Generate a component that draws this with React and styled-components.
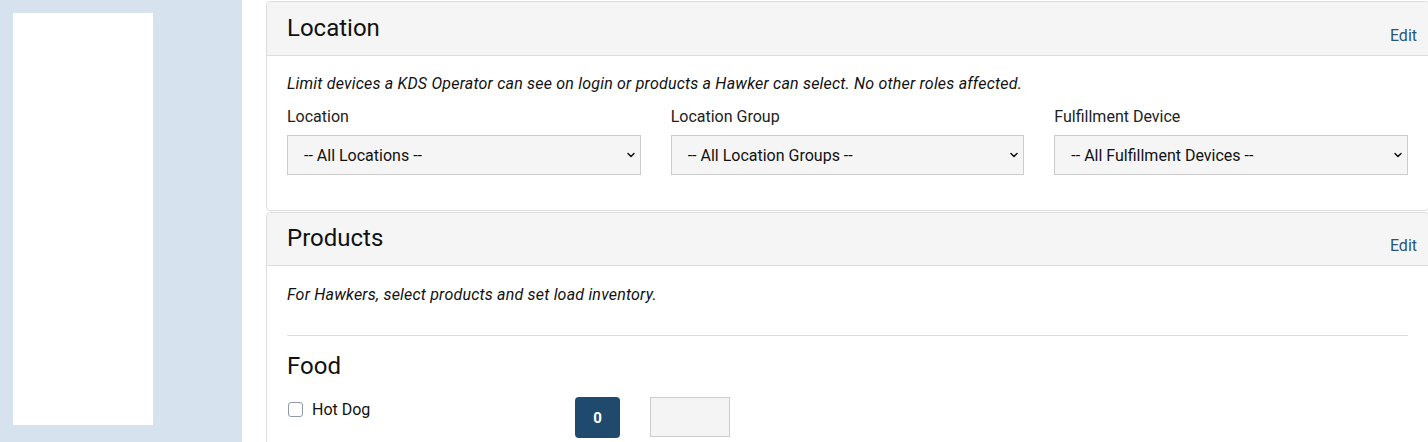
import React from 'react'
import styled, { createGlobalStyle } from 'styled-components'
import { ChevronDown } from 'lucide-react'

const GlobalStyle = createGlobalStyle`
    html, body {
        margin: 0;
        padding: 0;
        background: #ffffff;
        font-family: Roboto, "Liberation Sans", Arial, sans-serif;
        color: #1a1a1a;
        overflow: hidden;
    }
`

const Page = styled.div`
    display: flex;
    height: 442px;
`

const Sidebar = styled.aside`
    width: 242px;
    flex-shrink: 0;
    background: #d6e2ed;
    padding: 13px;
    box-sizing: border-box;
`

const SidebarPanel = styled.div`
    width: 140px;
    height: 412px;
    background: #ffffff;
`

const Main = styled.main`
    flex: 1;
    padding: 1px 0 0 24px;
    display: flex;
    flex-direction: column;
    gap: 1px;
    min-width: 0;
`

const Card = styled.section`
    border: 1px solid #dddddd;
    border-radius: 4px;
    margin-right: -1px;
    background: #ffffff;
    flex-shrink: 0;
`

const CardHeader = styled.header`
    display: flex;
    justify-content: space-between;
    align-items: flex-end;
    background: #f5f5f5;
    border-bottom: 1px solid #dddddd;
    border-radius: 4px 4px 0 0;
    padding: ${p => p.$tall ? '11px' : '10px'} 11px 11px 20px;
`

const CardTitle = styled.h2`
    margin: 0 0 1px;
    font-size: 24px;
    line-height: 30px;
    font-weight: 400;
    color: #111111;
`

const EditLink = styled.a`
    font-size: 16px;
    line-height: 18px;
    margin-bottom: -1px;
    color: #2a5478;
    text-decoration: none;
    cursor: pointer;
`

const CardBody = styled.div`
    padding: ${p => p.$top}px 20px ${p => p.$bottom}px 20px;
`

const Note = styled.p`
    margin: 0;
    font-size: 16px;
    line-height: 20px;
    font-style: italic;
    letter-spacing: 0.2px;
    color: #111111;
`

const FilterGrid = styled.div`
    display: grid;
    grid-template-columns: repeat(3, 1fr);
    column-gap: 30px;
    margin-top: 13px;
`

const Field = styled.label`
    display: flex;
    flex-direction: column;
    gap: 8px;
`

const FieldLabel = styled.span`
    font-size: 16px;
    line-height: 20px;
    color: #222222;
`

const SelectWrap = styled.div`
    position: relative;
    height: 40px;
`

const Select = styled.select`
    appearance: none;
    width: 100%;
    height: 40px;
    box-sizing: border-box;
    background: #f5f5f5;
    border: 1px solid #cccccc;
    border-radius: 0;
    padding: 0 30px 0 16px;
    font-family: inherit;
    font-size: 16px;
    color: #111111;
`

const Chevron = styled(ChevronDown)`
    position: absolute;
    right: 4px;
    top: 14px;
    pointer-events: none;
    color: #111111;
`

const Divider = styled.hr`
    border: 0;
    border-top: 1px solid #dddddd;
    margin: 30px 0 15px;
`

const GroupTitle = styled.h3`
    margin: 0 0 16px;
    font-size: 24px;
    line-height: 30px;
    font-weight: 400;
    color: #111111;
`

const ProductRow = styled.div`
    display: grid;
    grid-template-columns: 258px 45px 80px;
    column-gap: 30px;
    align-items: start;
`

const CheckLabel = styled.label`
    display: flex;
    align-items: center;
    gap: 9px;
    height: 24px;
    font-size: 16px;
    color: #111111;
`

const Checkbox = styled.span`
    width: 13px;
    height: 13px;
    border: 1px solid #8d9aab;
    border-radius: 3px;
    background: #ffffff;
    margin-left: 1px;
`

const CountButton = styled.button`
    width: 45px;
    height: 41px;
    border: 0;
    border-radius: 4px;
    background: #1f4a6e;
    color: #ffffff;
    font-family: inherit;
    font-weight: 700;
    font-size: 15px;
`

const LoadInput = styled.input`
    width: 80px;
    height: 40px;
    box-sizing: border-box;
    background: #f4f4f4;
    border: 1px solid #cccccc;
    border-radius: 0;
`

const filters = [
    { label: 'Location', option: '-- All Locations --' },
    { label: 'Location Group', option: '-- All Location Groups --' },
    { label: 'Fulfillment Device', option: '-- All Fulfillment Devices --' },
]

export default function App() {
    return (
        <Page>
            <GlobalStyle />
            <Sidebar>
                <SidebarPanel />
            </Sidebar>
            <Main>
                <Card>
                    <CardHeader $tall>
                        <CardTitle>Location</CardTitle>
                        <EditLink>Edit</EditLink>
                    </CardHeader>
                    <CardBody $top={18} $bottom={35}>
                        <Note>Limit devices a KDS Operator can see on login or products a Hawker can select. No other roles affected.</Note>
                        <FilterGrid>
                            {filters.map(f => (
                                <Field key={f.label}>
                                    <FieldLabel>{f.label}</FieldLabel>
                                    <SelectWrap>
                                        <Select defaultValue="all">
                                            <option value="all">{f.option}</option>
                                        </Select>
                                        <Chevron size={12} strokeWidth={3} />
                                    </SelectWrap>
                                </Field>
                            ))}
                        </FilterGrid>
                    </CardBody>
                </Card>
                <Card>
                    <CardHeader>
                        <CardTitle>Products</CardTitle>
                        <EditLink>Edit</EditLink>
                    </CardHeader>
                    <CardBody $top={19} $bottom={20}>
                        <Note>For Hawkers, select products and set load inventory.</Note>
                        <Divider />
                        <GroupTitle>Food</GroupTitle>
                        <ProductRow>
                            <CheckLabel>
                                <Checkbox />
                                Hot Dog
                            </CheckLabel>
                            <CountButton>0</CountButton>
                            <LoadInput />
                        </ProductRow>
                    </CardBody>
                </Card>
            </Main>
        </Page>
    )
}
